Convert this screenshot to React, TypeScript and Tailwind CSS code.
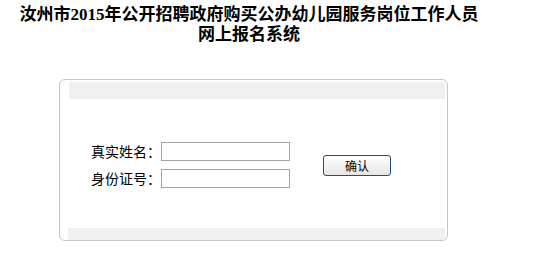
import React from "react";

export default function App() {
  const cjk = { fontFamily: '"Liberation Serif", "Noto Sans CJK SC", serif' };
  const sans = { fontFamily: '"Noto Sans CJK SC", "Liberation Sans", sans-serif' };
  return (
    <div className="w-[534px] h-[256px] bg-white overflow-hidden">
      <div
        className="w-[498px] pt-[5px] text-center text-[17px] leading-[20px] font-bold text-black"
        style={cjk}
      >
        <div>汝州市2015年公开招聘政府购买公办幼儿园服务岗位工作人员</div>
        <div>网上报名系统</div>
      </div>
      <div className="ml-[59px] mt-[34px] w-[389px] h-[162px] border border-[#c6c6c6] rounded-[6px] flex flex-col">
        <div className="mt-[2px] ml-[9px] mr-[2px] h-[17px] bg-[#f0f0f0]" />
        <div className="pt-[43px] pl-[31px] flex items-center">
          <div className="flex flex-col gap-[8px] text-[14px] text-black" style={sans}>
            <div className="flex items-center">
              <span className="w-[70px] leading-[19px]">真实姓名：</span>
              <input className="w-[129px] h-[19px] border border-[#a3a3a3] bg-white outline-none" />
            </div>
            <div className="flex items-center">
              <span className="w-[70px] leading-[19px]">身份证号：</span>
              <input className="w-[129px] h-[19px] border border-[#a3a3a3] bg-white outline-none" />
            </div>
          </div>
          <button
            className="ml-[33px] w-[68px] h-[21px] border border-[#1d4f78] rounded-[3px] bg-gradient-to-b from-[#ffffff] to-[#e6e6e6] text-[12px] leading-[19px] text-black"
            style={sans}
          >
            确认
          </button>
        </div>
        <div className="flex-1" />
        <div className="mb-[0px] ml-[8px] mr-[2px] h-[12px] bg-[#f0f0f0]" />
      </div>
    </div>
  );
}
